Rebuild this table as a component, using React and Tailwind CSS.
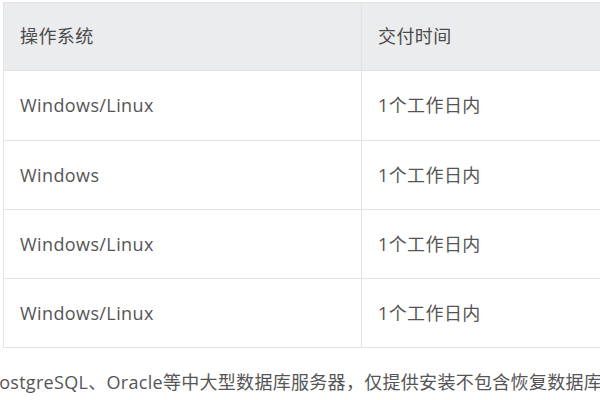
export default function App() {
  const rows = [
    ["Windows/Linux", "1个工作日内", "h-[70px]"],
    ["Windows", "1个工作日内", "h-[69px]"],
    ["Windows/Linux", "1个工作日内", "h-[69px]"],
    ["Windows/Linux", "1个工作日内", "h-[69px]"],
  ];
  return (
    <div
      className="w-[600px] h-[400px] overflow-hidden bg-white text-[#555] text-[18px] tracking-[0.4px]"
      style={{ fontFamily: '"Open Sans", "Noto Sans CJK SC", sans-serif' }}
    >
      <div className="pt-[2px] pl-[3px]">
        <div className="w-[700px] border-l border-t border-[#e3e3e3]">
          <div className="flex h-[68px] bg-[#ebecee] border-b border-[#e3e3e3]">
            <div className="w-[358px] border-r border-[#e3e3e3] pl-4 flex items-center text-[#4a4a4a]">操作系统</div>
            <div className="flex-1 pl-4 flex items-center text-[#4a4a4a]">交付时间</div>
          </div>
          {rows.map(([a, b, h], i) => (
            <div key={i} className={`flex border-b border-[#e3e3e3] ${h}`}>
              <div className="w-[358px] border-r border-[#e3e3e3] pl-4 flex items-center">{a}</div>
              <div className="flex-1 pl-4 flex items-center">{b}</div>
            </div>
          ))}
        </div>
      </div>
      <div className="mt-[22px] ml-[-12px] whitespace-nowrap leading-[24px] tracking-[0.3px]">
        PostgreSQL、Oracle等中大型数据库服务器，仅提供安装不包含恢复数据库
      </div>
    </div>
  );
}
